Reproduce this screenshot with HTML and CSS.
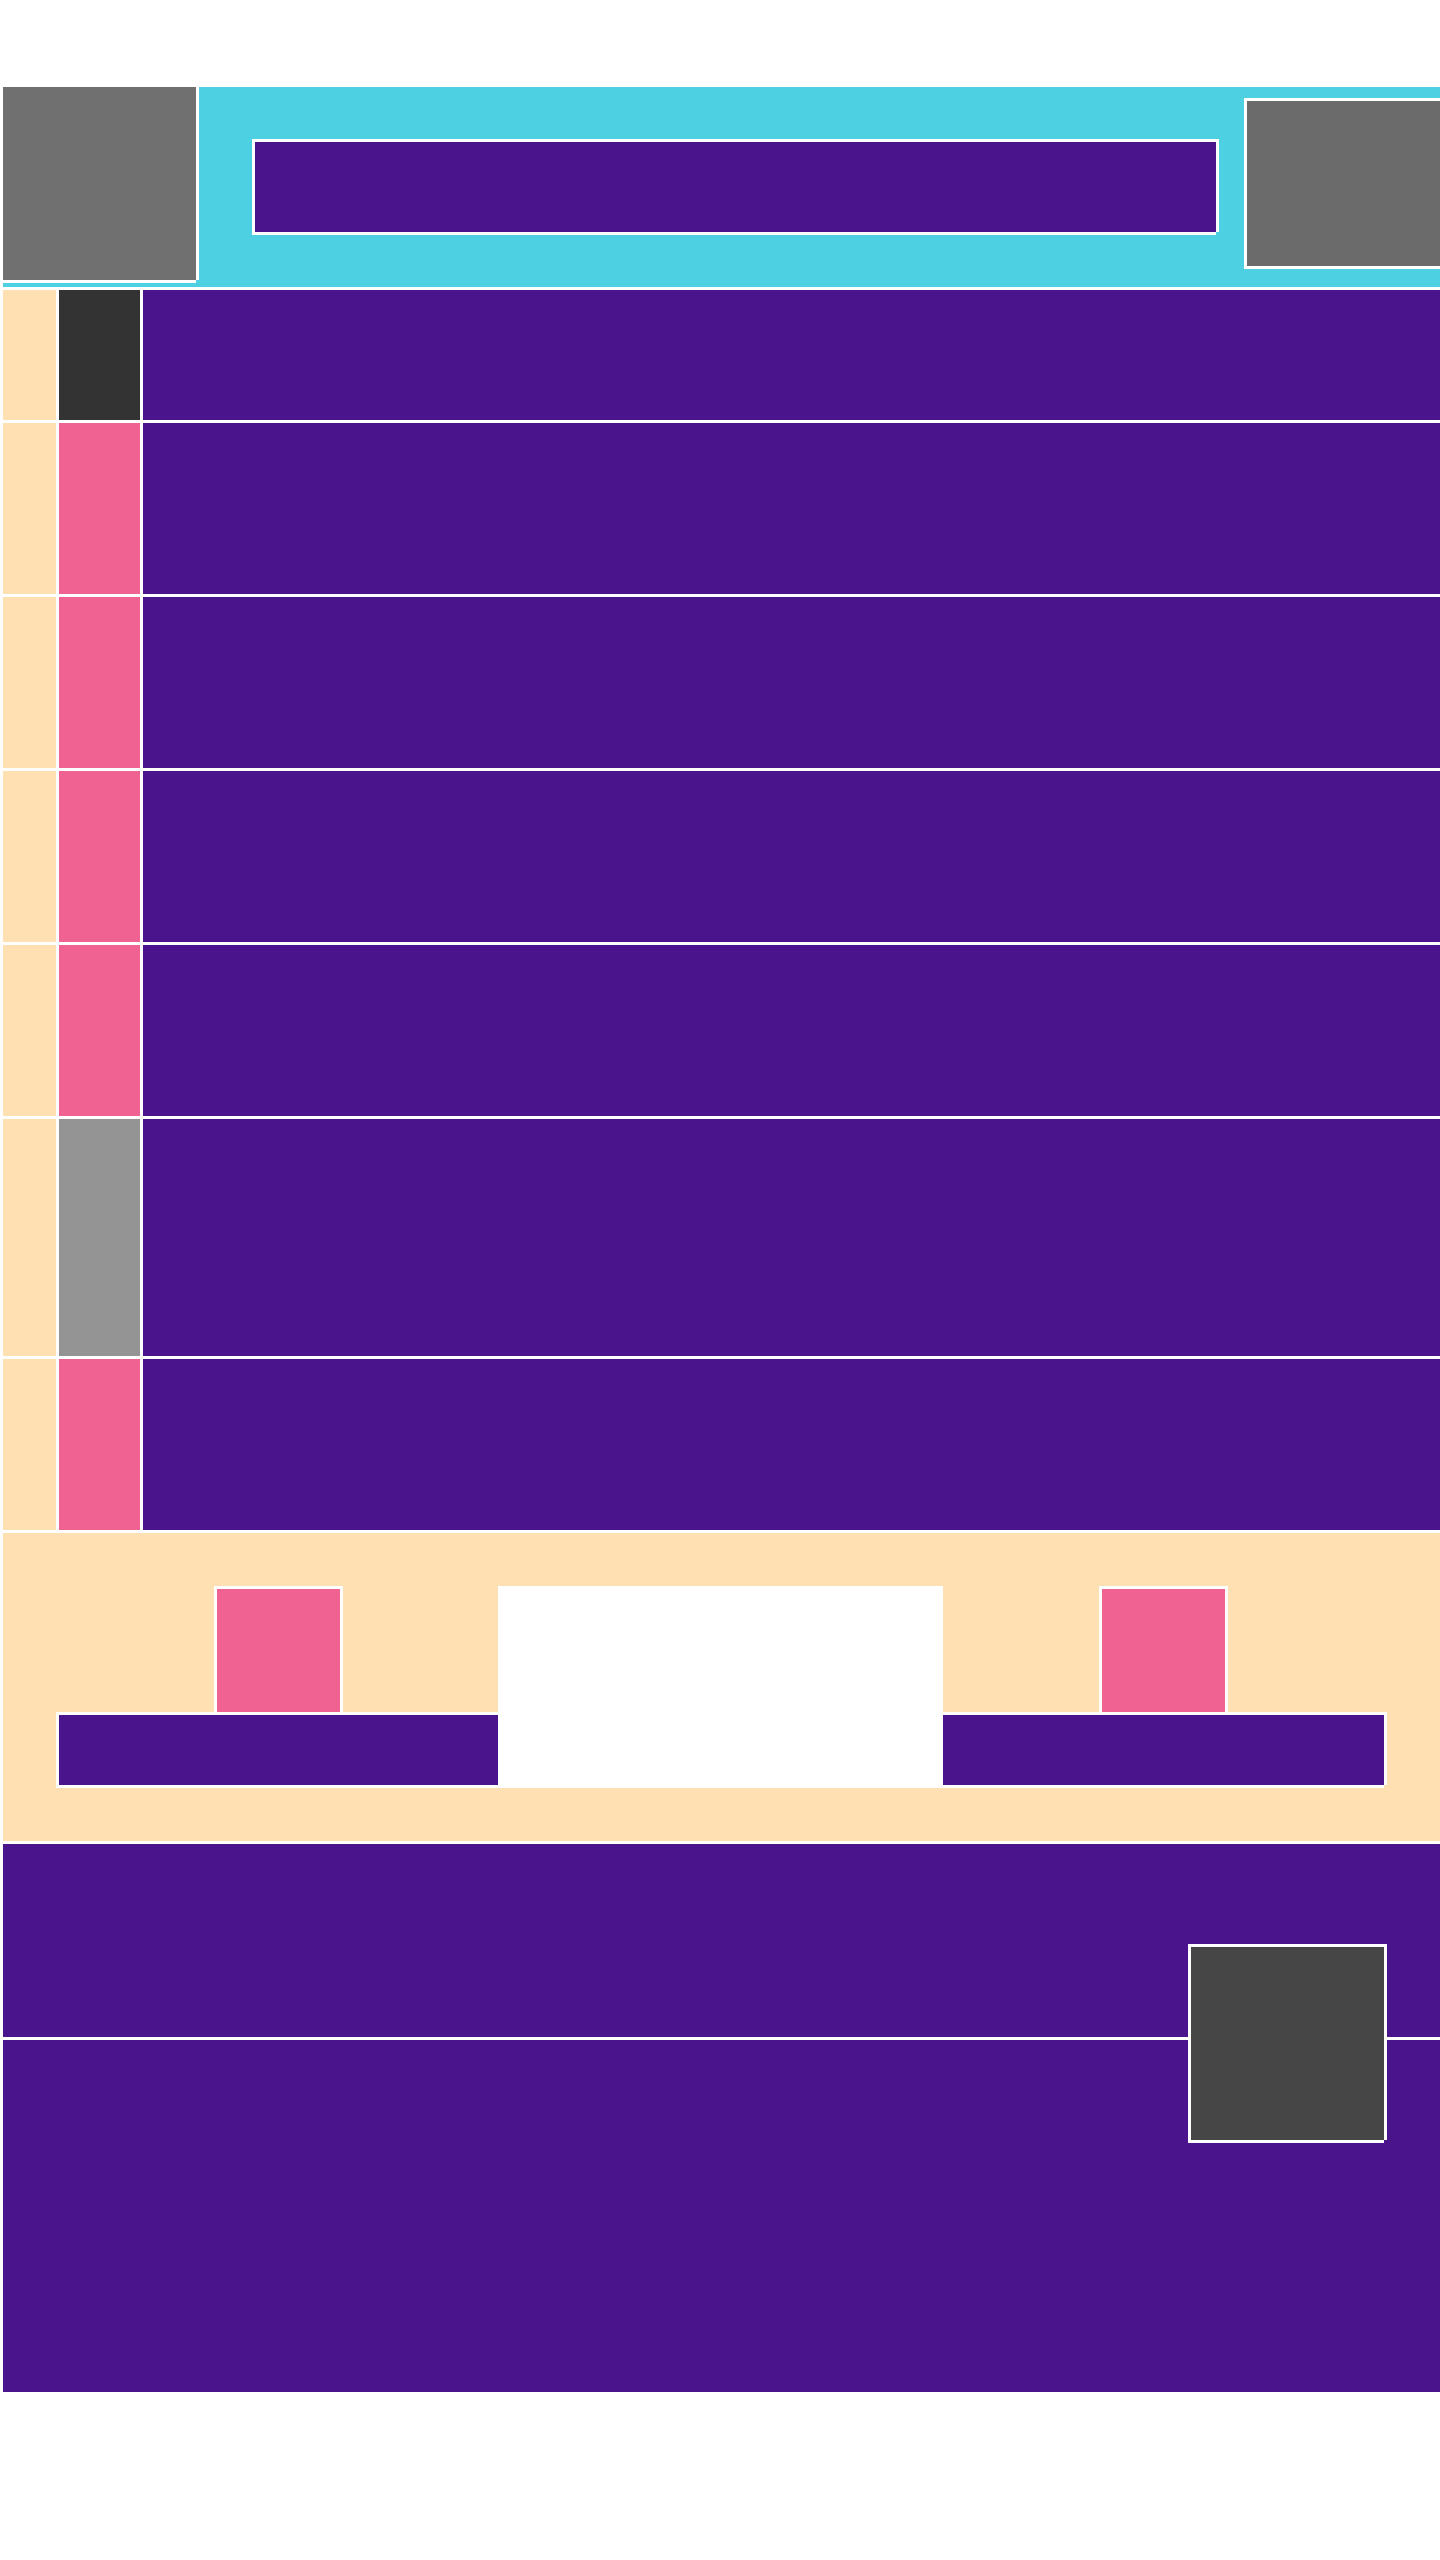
FILE: index.html
```html
<!DOCTYPE html>
<html lang="en">
<head>
    <meta charset="UTF-8">
    <meta name="viewport" content="width=device-width, initial-scale=1.0">
    <title>Layout</title>
    <link rel="stylesheet" href="styles.css">
</head>
<body>
    <div class="page">
        <header class="topbar">
            <div class="logo framed"></div>
            <div class="search framed"></div>
            <div class="avatar framed"></div>
        </header>

        <div class="list">
            <div class="row row-short">
                <div class="row-side"></div>
                <div class="row-mark mark-dark"></div>
                <div class="row-body"></div>
            </div>
            <div class="row">
                <div class="row-side"></div>
                <div class="row-mark"></div>
                <div class="row-body"></div>
            </div>
            <div class="row">
                <div class="row-side"></div>
                <div class="row-mark"></div>
                <div class="row-body"></div>
            </div>
            <div class="row">
                <div class="row-side"></div>
                <div class="row-mark"></div>
                <div class="row-body"></div>
            </div>
            <div class="row">
                <div class="row-side"></div>
                <div class="row-mark"></div>
                <div class="row-body"></div>
            </div>
            <div class="row row-tall">
                <div class="row-side"></div>
                <div class="row-mark mark-gray"></div>
                <div class="row-body"></div>
            </div>
            <div class="row">
                <div class="row-side"></div>
                <div class="row-mark"></div>
                <div class="row-body"></div>
            </div>
        </div>

        <section class="promo">
            <div class="promo-col promo-left">
                <div class="promo-icon framed"></div>
                <div class="promo-bar framed"></div>
            </div>
            <div class="promo-card"></div>
            <div class="promo-col promo-right">
                <div class="promo-icon framed"></div>
                <div class="promo-bar framed"></div>
            </div>
        </section>

        <footer class="footer">
            <div class="footer-top"></div>
            <div class="footer-bottom"></div>
            <div class="to-top framed"></div>
        </footer>
    </div>
</body>
</html>
```

FILE: styles.css
```css
html, body {
    margin: 0;
    overflow: hidden;
    background: #fff;
}
.page {
    width: 1440px;
    box-sizing: border-box;
    padding: 87px 0 0 3px;
    display: flex;
    flex-direction: column;
    gap: 3px;
}

/* white frame, open at the bottom-right corner */
.framed {
    box-shadow: -3px -3px 0 #fff, 3px -3px 0 #fff, 3px 0 0 #fff,
                -3px 0 0 #fff, -3px 3px 0 #fff, 0 3px 0 #fff;
}

.topbar {
    height: 200px;
    background: #4dd0e1;
    display: flex;
    align-items: center;
}
.logo {
    width: 193px;
    height: 193px;
    background: #707070;
    align-self: flex-start;
}
.search {
    flex: 1;
    height: 90px;
    margin: 0 31px 0 59px;
    background: #4a148c;
}
.avatar {
    width: 193px;
    height: 165px;
    background: #6b6b6b;
    align-self: flex-start;
    margin-top: 14px;
}

.list {
    display: flex;
    flex-direction: column;
    gap: 3px;
}
.row {
    height: 171px;
    display: grid;
    grid-template-columns: 53px 81px 1fr;
    gap: 3px;
}
.row-short {
    height: 130px;
}
.row-tall {
    height: 237px;
}
.row-side {
    background: #ffe0b2;
}
.row-mark {
    background: #f06292;
}
.mark-dark {
    background: #333333;
}
.mark-gray {
    background: #949494;
}
.row-body {
    background: #4a148c;
}

.promo {
    height: 308px;
    background: #ffe0b2;
    display: flex;
    align-items: center;
    padding-left: 56px;
}
.promo-col {
    display: flex;
    flex-direction: column;
    align-items: center;
    gap: 3px;
}
.promo-left {
    width: 439px;
}
.promo-right {
    width: 441px;
}
.promo-icon {
    width: 123px;
    height: 123px;
    background: #f06292;
}
.promo-bar {
    align-self: stretch;
    height: 70px;
    background: #4a148c;
}
.promo-card {
    width: 445px;
    height: 202px;
    background: #fff;
}

.footer {
    position: relative;
    display: flex;
    flex-direction: column;
    gap: 3px;
}
.footer-top {
    height: 193px;
    background: #4a148c;
}
.footer-bottom {
    height: 352px;
    background: #4a148c;
}
.to-top {
    position: absolute;
    left: 1188px;
    top: 103px;
    width: 193px;
    height: 193px;
    background: #464646;
}
```
